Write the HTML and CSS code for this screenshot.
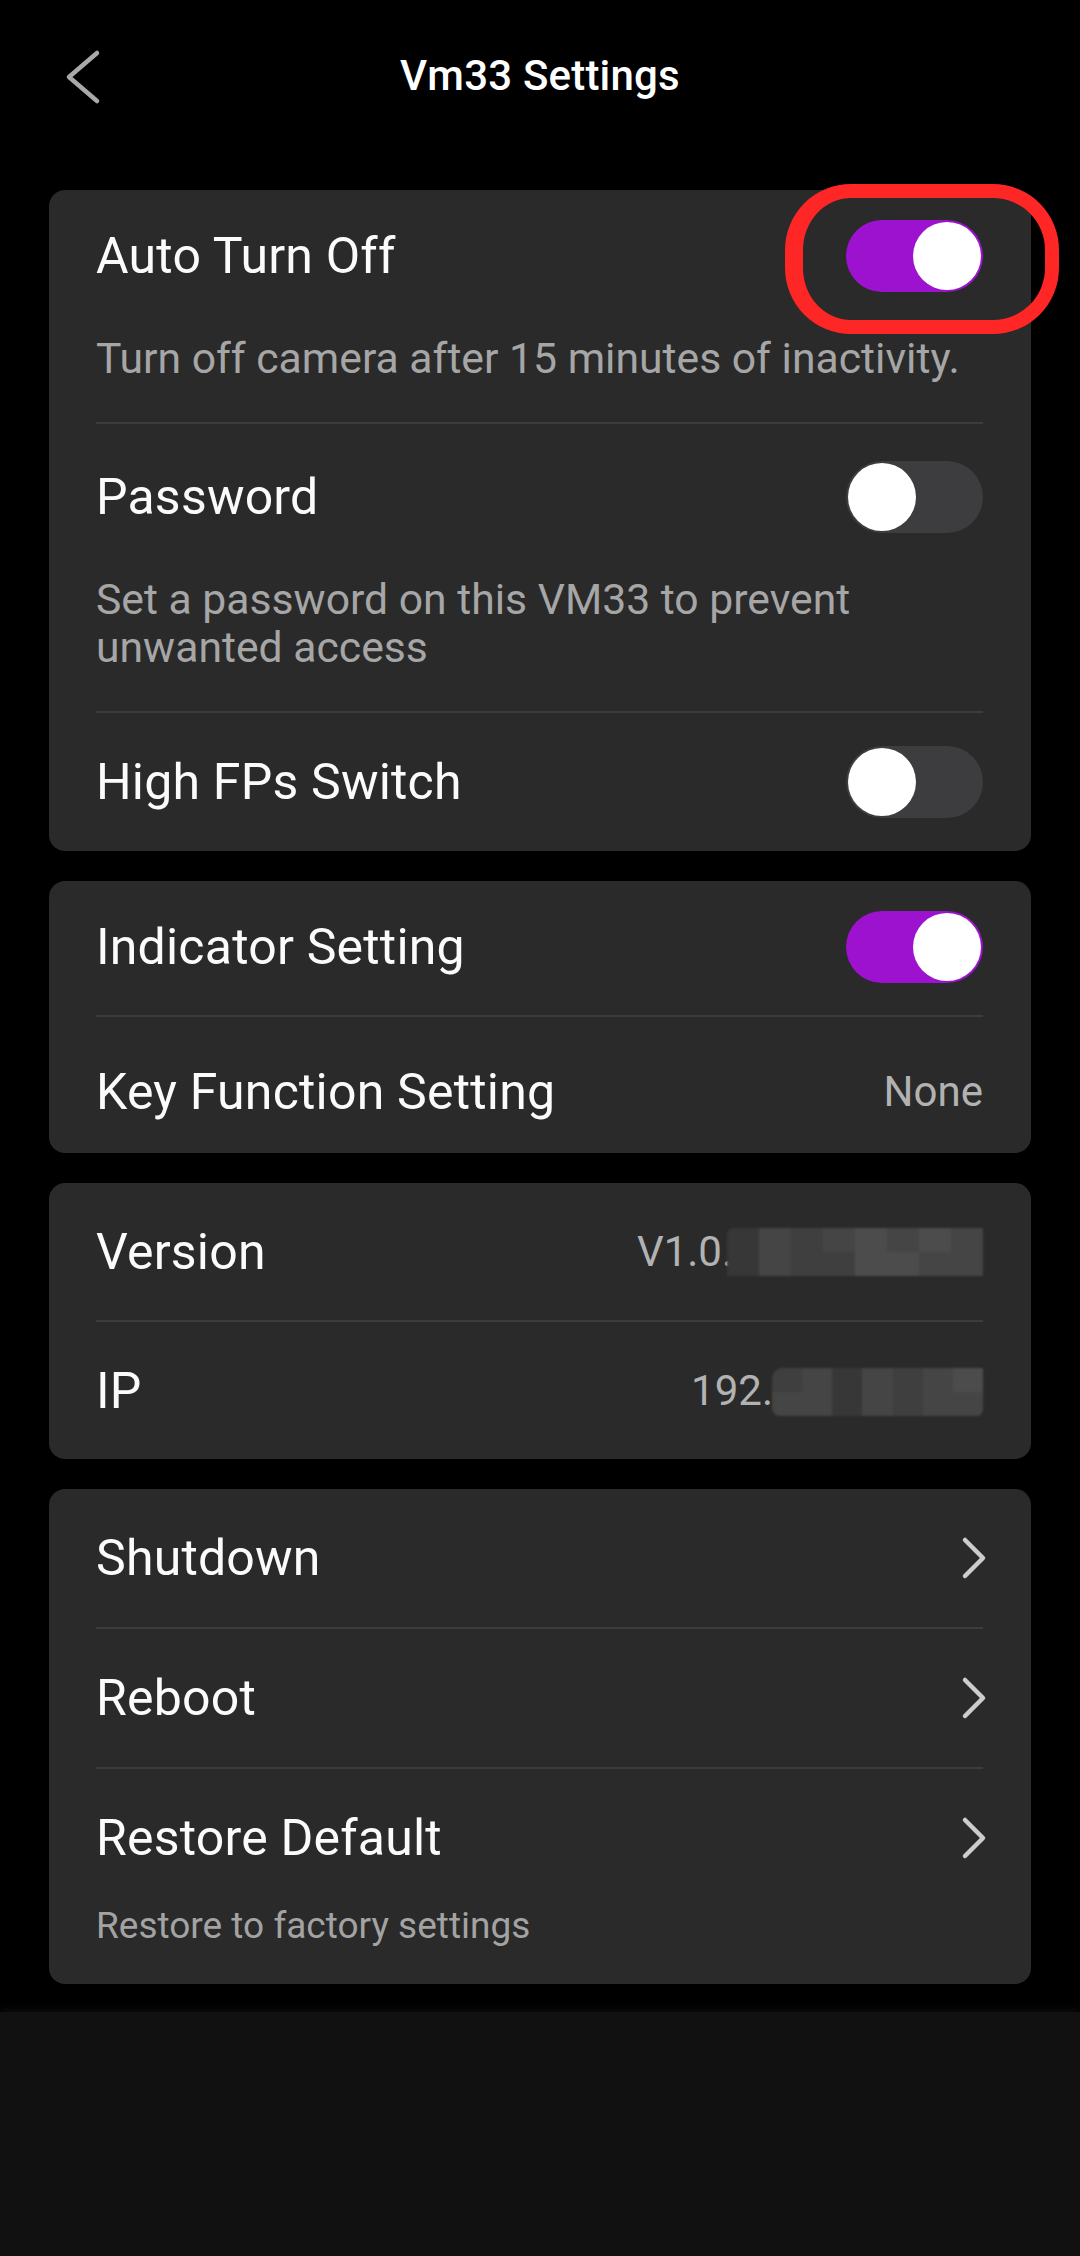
FILE: index.html
```html
<!DOCTYPE html>
<html lang="en">
<head>
<meta charset="utf-8">
<title>Vm33 Settings</title>
<link rel="stylesheet" href="styles.css">
</head>
<body>
<div class="screen">
  <header class="topbar">
    <div class="back">
      <svg class="back-icon" width="40" height="56" viewBox="0 0 40 56"><path d="M33 4 L5 28 L33 52" fill="none" stroke="#a9a9a9" stroke-width="4.5" stroke-linecap="round" stroke-linejoin="round"/></svg>
    </div>
    <h1 class="title">Vm33 Settings</h1>
    <div class="spacer"></div>
  </header>

  <main class="cards">
    <section class="card card-first">
      <div class="item sub-item top">
        <div class="item-head">
          <span class="label">Auto Turn Off</span>
          <span class="toggle on"><span class="thumb"></span></span>
        </div>
        <p class="sub">Turn off camera after 15 minutes of inactivity.</p>
      </div>
      <div class="item sub-item">
        <div class="item-head">
          <span class="label">Password</span>
          <span class="toggle"><span class="thumb"></span></span>
        </div>
        <p class="sub">Set a password on this VM33 to prevent<br>unwanted access</p>
      </div>
      <div class="item">
        <div class="item-head">
          <span class="label">High FPs Switch</span>
          <span class="toggle"><span class="thumb"></span></span>
        </div>
      </div>
      <div class="highlight"></div>
    </section>

    <section class="card card-compact">
      <div class="item">
        <div class="item-head">
          <span class="label">Indicator Setting</span>
          <span class="toggle on"><span class="thumb"></span></span>
        </div>
      </div>
      <div class="item">
        <div class="item-head">
          <span class="label">Key Function Setting</span>
          <span class="value">None</span>
        </div>
      </div>
    </section>

    <section class="card card-info">
      <div class="item">
        <div class="item-head">
          <span class="label">Version</span>
          <span class="value masked"><span>V1.0.</span>
            <span class="mosaic mosaic-version">
              <i class="c1"></i><i class="c3"></i><i class="c2"></i><i class="c3"></i><i class="c4"></i><i class="c3"></i><i class="c4"></i><i class="c3"></i>
              <i class="c1"></i><i class="c3"></i><i class="c2"></i><i class="c2"></i><i class="c4"></i><i class="c4"></i><i class="c3"></i><i class="c3"></i>
            </span>
          </span>
        </div>
      </div>
      <div class="item">
        <div class="item-head">
          <span class="label">IP</span>
          <span class="value masked"><span>192.</span>
            <span class="mosaic mosaic-ip">
              <i class="c2"></i><i class="c3"></i><i class="c1"></i><i class="c3"></i><i class="c2"></i><i class="c3"></i><i class="c4"></i>
              <i class="c3"></i><i class="c3"></i><i class="c1"></i><i class="c3"></i><i class="c2"></i><i class="c3"></i><i class="c3"></i>
            </span>
          </span>
        </div>
      </div>
    </section>

    <section class="card">
      <div class="item">
        <div class="item-head">
          <span class="label">Shutdown</span>
          <svg class="chev" width="28" height="44" viewBox="0 0 28 44"><path d="M6 4 L24 22 L6 40" fill="none" stroke="#cdcdcd" stroke-width="4.5" stroke-linecap="round" stroke-linejoin="round"/></svg>
        </div>
      </div>
      <div class="item">
        <div class="item-head">
          <span class="label">Reboot</span>
          <svg class="chev" width="28" height="44" viewBox="0 0 28 44"><path d="M6 4 L24 22 L6 40" fill="none" stroke="#cdcdcd" stroke-width="4.5" stroke-linecap="round" stroke-linejoin="round"/></svg>
        </div>
      </div>
      <div class="item restore">
        <div class="item-head">
          <span class="label">Restore Default</span>
          <svg class="chev" width="28" height="44" viewBox="0 0 28 44"><path d="M6 4 L24 22 L6 40" fill="none" stroke="#cdcdcd" stroke-width="4.5" stroke-linecap="round" stroke-linejoin="round"/></svg>
        </div>
        <p class="sub small">Restore to factory settings</p>
      </div>
    </section>
  </main>

  <footer class="bottom-panel"></footer>
</div>
</body>
</html>
```
FILE: styles.css
```css
* { box-sizing: border-box; }

html, body {
  margin: 0;
  padding: 0;
  background: #000;
}

body {
  font-family: Roboto, "Noto Sans", "Liberation Sans", sans-serif;
  color: #fff;
  width: 1080px;
  height: 2256px;
  overflow: hidden;
}

.screen {
  display: flex;
  flex-direction: column;
  height: 2256px;
}

.topbar {
  height: 152px;
  display: grid;
  grid-template-columns: 1fr auto 1fr;
  align-items: center;
}

.back {
  padding-left: 64px;
  display: flex;
  align-items: center;
  padding-top: 1px;
}

.title {
  margin: 0;
  font-size: 42px;
  font-weight: 500;
  line-height: 48px;
  color: #fff;
  letter-spacing: 0.2px;
}

.cards {
  margin-top: 38px;
  display: flex;
  flex-direction: column;
  gap: 30px;
  padding: 0 49px;
}

.card {
  background: #2a2a2a;
  border-radius: 16px;
  padding: 0 48px 0 47px;
}

.card-first {
  position: relative;
}

.item {
  padding: 33px 0;
}

.card-compact .item {
  padding: 30px 0 32px;
}

.card-compact .item + .item {
  padding: 39px 0 25px;
}

.card-info .item {
  padding: 32.5px 0;
}

.item + .item {
  border-top: 2px solid #3c3c3c;
}

.item.sub-item {
  padding: 37px 0 40px;
}

.item.sub-item.top {
  padding-top: 30px;
}

.item.restore {
  padding: 33px 0 37px;
}

.item-head {
  height: 72px;
  display: flex;
  align-items: center;
  justify-content: space-between;
}

.label {
  font-size: 50px;
  line-height: 72px;
  color: #fbfbfb;
  white-space: nowrap;
  letter-spacing: 0.2px;
}

.sub {
  margin: 42px 0 0;
  font-size: 42.7px;
  line-height: 48px;
  color: #a6a6a6;
}

.sub.small {
  margin-top: 31px;
  font-size: 37px;
  line-height: 42px;
  color: #a3a3a3;
}

.value {
  font-size: 42px;
  line-height: 48px;
  color: #b2b2b2;
  display: flex;
  align-items: center;
}

.toggle {
  width: 137px;
  height: 72px;
  border-radius: 36px;
  background: #3d3d40;
  display: flex;
  align-items: center;
  padding: 2px;
}

.toggle.on {
  background: #9c12cf;
  justify-content: flex-end;
}

.thumb {
  width: 68px;
  height: 68px;
  border-radius: 50%;
  background: #fff;
}

.chev {
  display: block;
  margin-right: -4px;
}

.mosaic {
  display: grid;
  grid-template-rows: 24px 24px;
  filter: blur(1px);
}

.mosaic i {
  display: block;
}

.mosaic-version {
  width: 256px;
  margin-left: -6px;
  grid-template-columns: repeat(8, 1fr);
  border-radius: 6px 0 0 0;
  overflow: hidden;
}

.mosaic-ip {
  width: 211px;
  margin-left: -1px;
  grid-template-columns: repeat(7, 1fr);
  border-radius: 10px 0 6px 8px;
  overflow: hidden;
  margin-top: 2px;
}

.c1 { background: #373737; }
.c2 { background: #3f3f3f; }
.c3 { background: #454545; }
.c4 { background: #4c4c4c; }

.highlight {
  position: absolute;
  left: 736px;
  top: -6px;
  width: 274px;
  height: 150px;
  border: 14px solid #ff2626;
  border-left-width: 18px;
  border-radius: 66px;
  pointer-events: none;
}

.bottom-panel {
  margin-top: 28px;
  flex: 1;
  background: #111111;
  box-shadow: 0 -4px 8px rgba(17, 17, 17, 0.6);
}
```
